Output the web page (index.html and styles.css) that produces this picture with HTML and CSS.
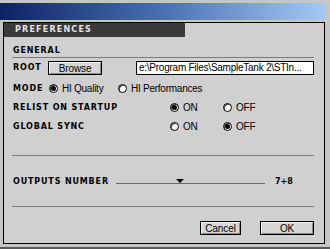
FILE: index.html
```html
<!DOCTYPE html>
<html lang="en">
<head>
  <meta charset="UTF-8" />
  <title>Preferences</title>
  <link rel="stylesheet" href="styles.css">
</head>
<body>
  <div class="window">
    <div class="titlebar"></div>
    <div class="panel">
      <div class="tab">PREFERENCES</div>
      <div class="content">
        <div class="section">GENERAL</div>

        <div class="row root">
          <span class="label">ROOT</span>
          <button class="btn browse">Browse</button>
          <div class="path">e:\Program Files\SampleTank 2\STIn...</div>
        </div>

        <div class="row mode">
          <span class="label">MODE</span>
          <span class="choice first"><span class="radio on"></span>HI Quality</span>
          <span class="choice"><span class="radio"></span>HI Performances</span>
        </div>

        <div class="row toggle">
          <span class="label">RELIST ON STARTUP</span>
          <span class="choice"><span class="radio on"></span>ON</span>
          <span class="choice"><span class="radio"></span>OFF</span>
        </div>

        <div class="row toggle">
          <span class="label">GLOBAL SYNC</span>
          <span class="choice"><span class="radio"></span>ON</span>
          <span class="choice"><span class="radio on"></span>OFF</span>
        </div>

        <div class="rule top"></div>

        <div class="row outputs">
          <span class="label">OUTPUTS NUMBER</span>
          <div class="slider"><span class="thumb"></span></div>
          <span class="value">7+8</span>
        </div>

        <div class="rule bottom"></div>

        <div class="actions">
          <button class="btn cancel">Cancel</button>
          <button class="btn ok">OK</button>
        </div>
      </div>
    </div>
  </div>
</body>
</html>
```

FILE: styles.css
```css
* { box-sizing: border-box; }
body { margin: 0; background: #c8c8c8; }

.window {
  width: 330px; height: 249px; background: #c6c6c6;
  padding-top: 3px; border-bottom: 2px solid #5a5a5a;
}
.titlebar {
  height: 17px; width: 326px;
  background: linear-gradient(to right, #0c2266, #4a70b4 50%, #a6c9f4);
}
.panel {
  margin: 2px 0 0 3px; width: 322px; height: 222px;
  border: 1px solid #000; background: #d0d0d0;
}

.tab {
  width: 181px; height: 14px; background: #3a3a3a; color: #e4e4e4;
  padding-left: 11px;
  font: bold 8px/14px "DejaVu Sans", sans-serif; letter-spacing: 1.2px;
}

.content { padding: 7px 10px 0 8px; }

.label, .section, .value {
  font: bold 8px/14px "DejaVu Sans", sans-serif; letter-spacing: 0.85px; color: #000;
  white-space: nowrap;
}
.section { height: 14px; border-bottom: 1px solid #7c7c7c; padding-left: 1px; }

.row { display: flex; align-items: center; }
.row .label { padding-left: 1px; }

.root { height: 14px; margin-top: 3px; }
.root .label { width: 36px; }
.path {
  margin-left: 34px; width: 178px; height: 14px; background: #fff;
  border: 1px solid #000; padding-left: 2px;
  font: 10px/12px "Liberation Sans", Arial, sans-serif; letter-spacing: -0.25px;
  white-space: nowrap; overflow: hidden;
}

.btn {
  height: 14px; padding: 0; background: #d6d6d6; color: #000;
  border: 1px solid #000; box-shadow: inset 1px 1px #f2f2f2, inset -1px -1px #8a8a8a;
  font: 10px/11px "Liberation Sans", Arial, sans-serif; letter-spacing: -0.1px;
}
.browse { width: 54px; }

.choice {
  display: flex; align-items: center; gap: 4px; white-space: nowrap;
  font: 10px/11px "Liberation Sans", Arial, sans-serif; letter-spacing: -0.25px; color: #000;
}
.radio {
  flex: none; width: 9px; height: 9px; border-radius: 50%; background: #fff;
  border: 1px solid #000; box-shadow: inset 1px 1px #555;
  display: flex; align-items: center; justify-content: center;
}
.radio.on::after {
  content: ""; width: 5px; height: 5px; border-radius: 50%; background: #000;
}

.mode { height: 19px; margin-top: 4px; }
.mode .label { width: 37px; }
.mode .choice.first { width: 69px; }

.toggle { height: 19px; }
.toggle .label { width: 158px; }
.toggle .choice { width: 53px; }

.rule { border-top: 1px solid #7c7c7c; }
.rule.top { margin-top: 19px; }
.rule.bottom { margin-top: 15px; }

.outputs { height: 18px; margin-top: 17px; }
.outputs .label { width: 104px; }
.slider {
  position: relative; width: 149px; height: 1px; background: #6a6a6a; margin-top: 2px;
}
.thumb {
  position: absolute; left: 60px; bottom: 1px;
  border-left: 4px solid transparent; border-right: 4px solid transparent;
  border-top: 4px solid #000;
}
.value { margin-left: 10px; letter-spacing: 0; }

.actions { display: flex; justify-content: flex-end; gap: 19px; margin-top: 14px; }
.cancel { width: 41px; }
.ok { width: 54px; }
```
